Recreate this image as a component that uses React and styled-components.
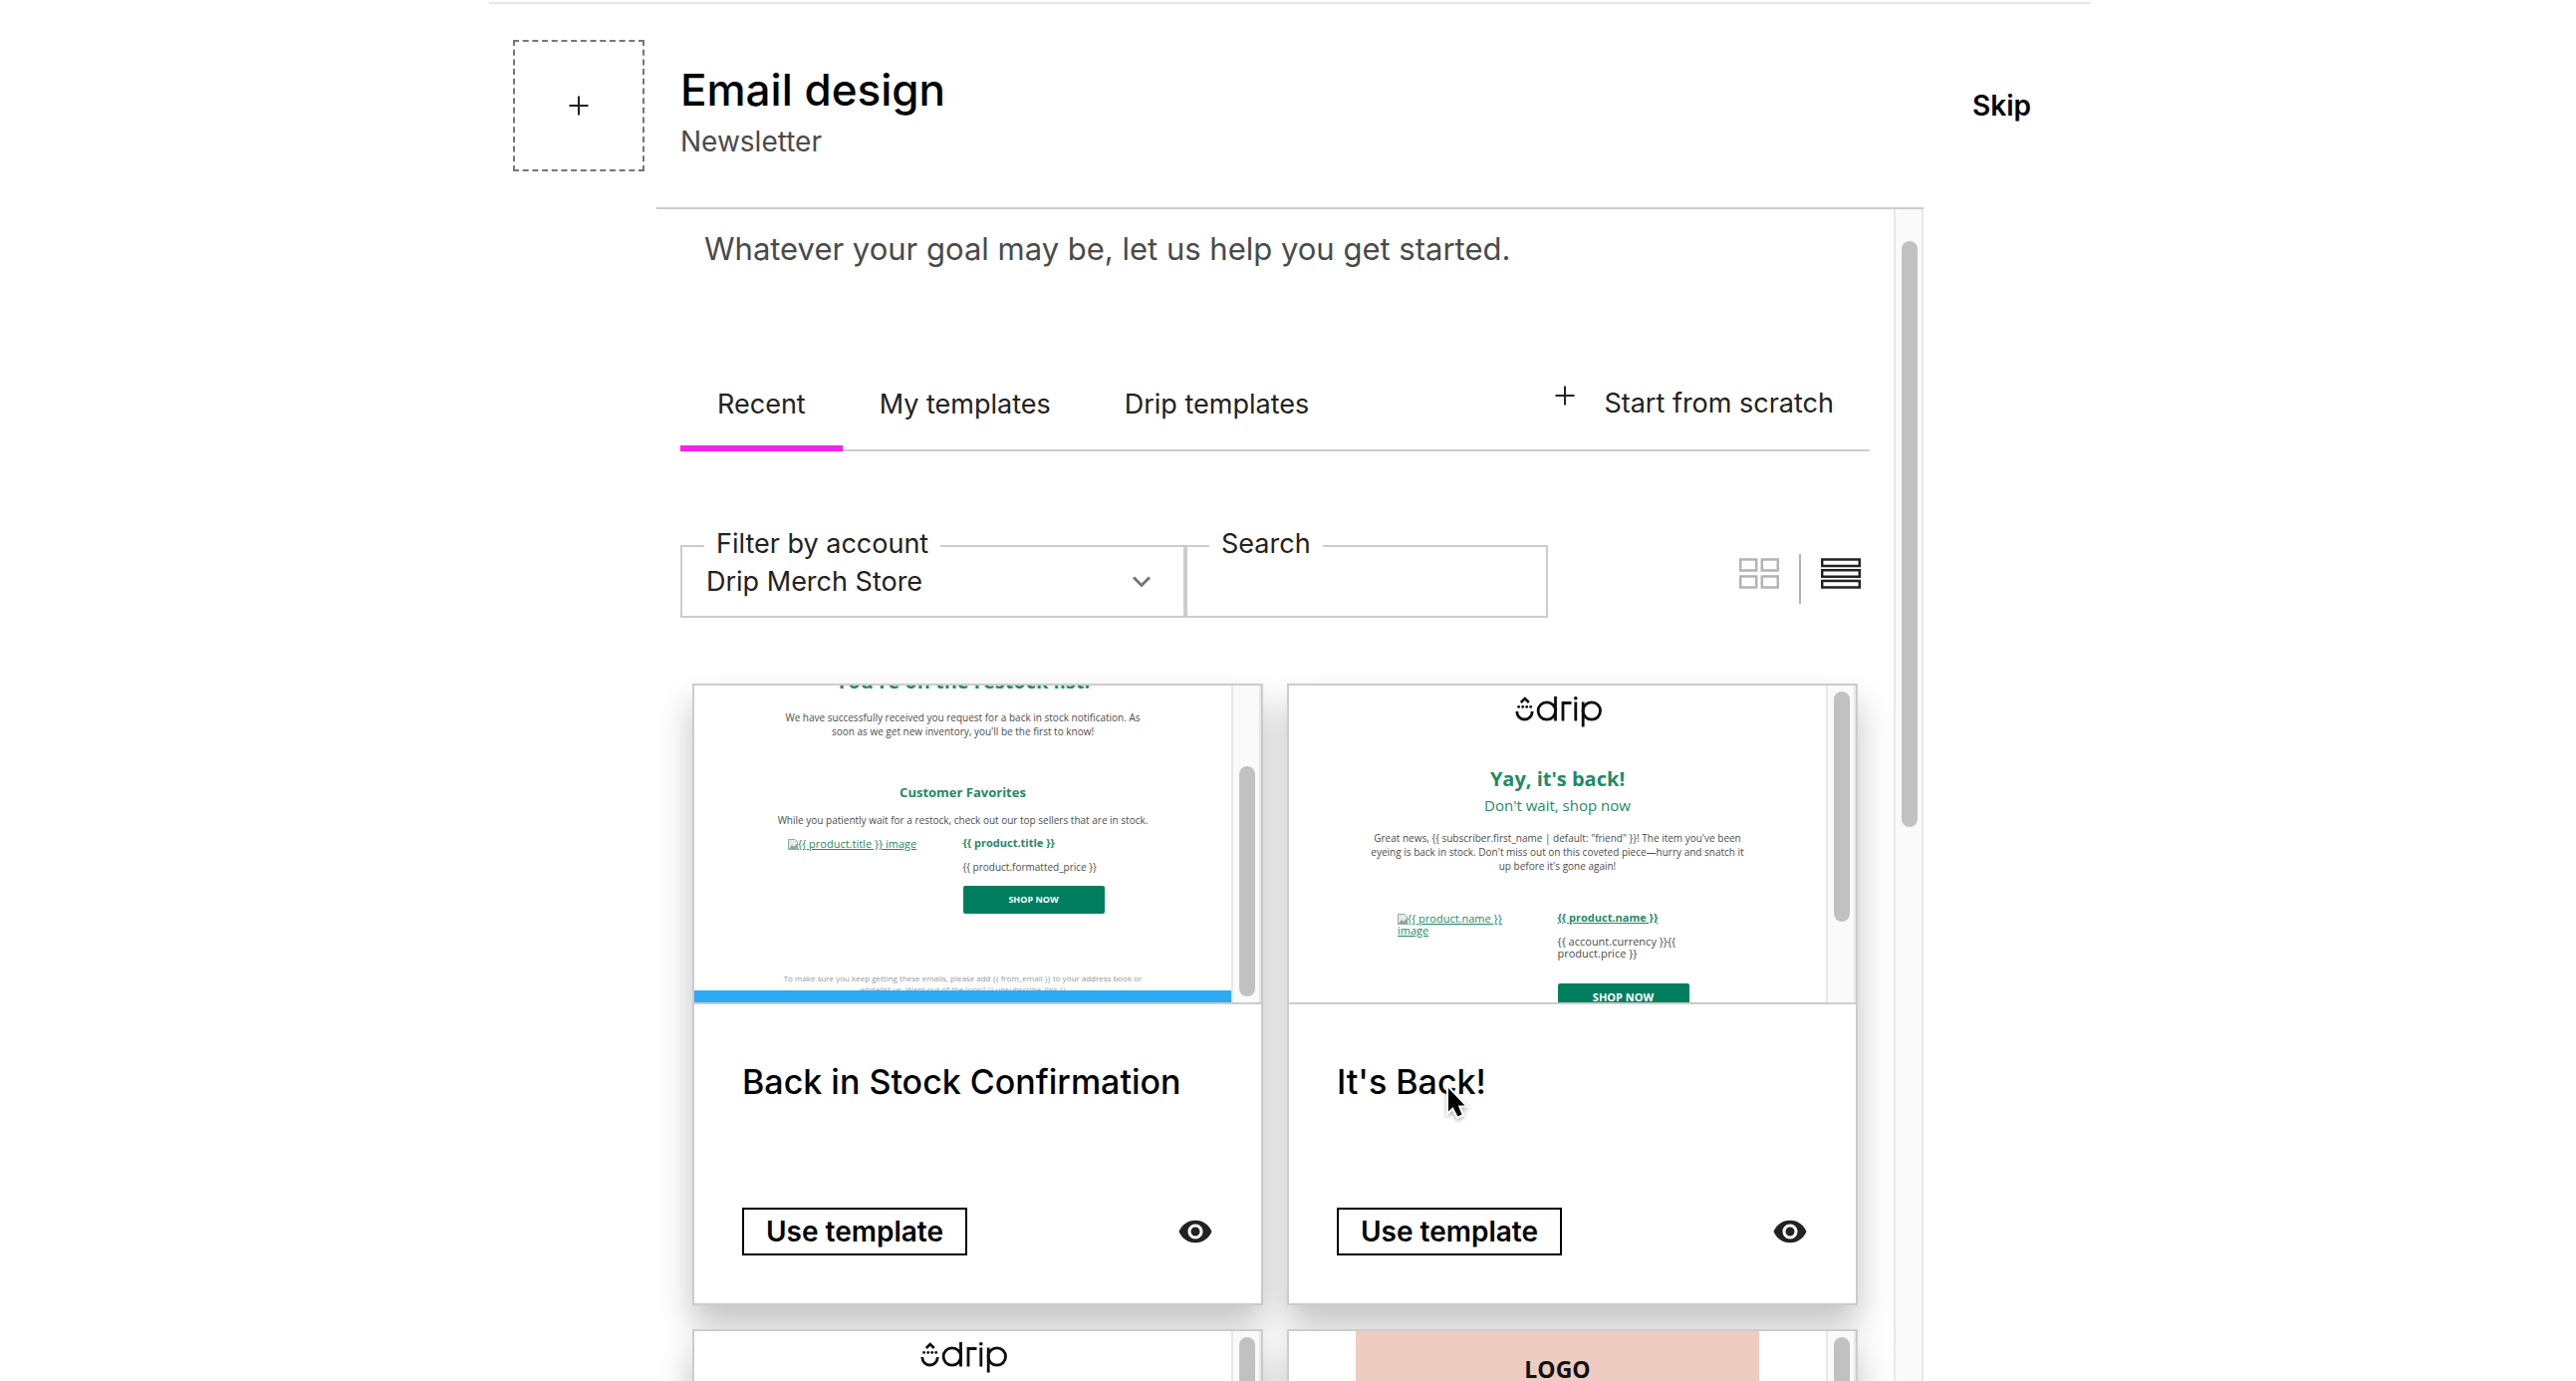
import React from 'react';
import styled, { createGlobalStyle, css } from 'styled-components';
import { MdVisibility } from 'react-icons/md';

const GlobalStyle = createGlobalStyle`
    * {
        box-sizing: border-box;
    }
    body {
        margin: 0;
        background: #fff;
        color: #222;
        font-family: Inter, "Liberation Sans", sans-serif;
        font-size: 28px;
        line-height: 36px;
        overflow: hidden;
    }
    h1, h2, h3, p {
        margin: 0;
    }
    button, input, select {
        font: inherit;
        color: inherit;
        border: 0;
        padding: 0;
        background: none;
        border-radius: 0;
    }
`;

const Page = styled.div`
    display: flex;
    flex-direction: column;
    align-items: center;
    height: 100vh;
    padding: 2px 0 0 4px;
    overflow: hidden;
`;

const Header = styled.header`
    display: flex;
    align-items: center;
    gap: 36px;
    flex: none;
    width: 100%;
    max-width: 1608px;
    height: 206px;
    padding: 0 60px 0 24px;
    border-top: 2px solid #e6e6e6;
`;

const AddButton = styled.button`
    display: flex;
    align-items: center;
    justify-content: center;
    width: 132px;
    height: 132px;
    border: 2px dashed #767676;
`;

const Heading = styled.div`
    flex: 1;
    padding-top: 12px;
`;

const HeaderTitle = styled.h1`
    font-size: 44px;
    font-weight: 500;
    line-height: 60px;
    color: #000;
`;

const HeaderSub = styled.p`
    color: #4a4a4a;
    line-height: 44px;
`;

const SkipButton = styled.button`
    font-weight: 600;
    color: #000;
`;

const Main = styled.main`
    display: flex;
    flex: 1;
    min-height: 0;
    width: 100%;
    max-width: 1272px;
    border-top: 2px solid #ccc;
`;

const Content = styled.div`
    flex: 1;
    min-width: 0;
    padding: 18px 24px 0;
    overflow: hidden;
`;

const Track = styled.div`
    flex: none;
    width: 30px;
    padding: ${props => props.$offset}px 6px 6px;
    background: #fafafa;
    border: solid #e8e8e8;
    border-width: 0 2px;
`;

const Thumb = styled.div`
    width: 16px;
    margin: 0 auto;
    height: ${props => props.$size}px;
    border-radius: 8px;
    background: #c1c1c1;
`;

const Intro = styled.p`
    padding: 0 24px;
    font-size: 31px;
    line-height: 44px;
    color: #4a4a4a;
`;

const Tabs = styled.nav`
    display: flex;
    margin-top: 100px;
    height: 81px;
    border-bottom: 2px solid #ccc;
    font-size: 27px;
`;

const Tab = styled.button`
    height: 81px;
    padding: 0 37px 8px;
    border-bottom: 6px solid transparent;
    ${props => props.$active &&
        css`
            border-bottom-color: #f721f0;
    `}
`;

const ScratchButton = styled.button`
    display: flex;
    align-items: center;
    gap: 29px;
    margin-left: auto;
    padding: 0 36px 13px 0;
    svg {
        margin-bottom: 16px;
    }
`;

const Toolbar = styled.div`
    display: flex;
    align-items: flex-end;
    margin-top: 77px;
    font-size: 27px;
`;

const Field = styled.fieldset`
    position: relative;
    width: ${props => props.$width}px;
    height: 90px;
    margin: 0;
    padding: 0 22px;
    border: 2px solid #ccc;
`;

const Legend = styled.legend`
    padding: 0 12px 4px;
    line-height: 32px;
`;

const Select = styled.select`
    display: block;
    width: 100%;
    height: 36px;
    padding-left: 2px;
    appearance: none;
    outline: none;
`;

const Chevron = styled.svg`
    position: absolute;
    right: 33px;
    top: 12px;
    pointer-events: none;
`;

const SearchInput = styled.input`
    display: block;
    width: 100%;
    height: 36px;
    outline: none;
`;

const ViewSwitch = styled.div`
    display: flex;
    align-items: center;
    gap: 20px;
    height: 50px;
    margin: 0 9px 14px auto;
`;

const IconButton = styled.button`
    display: flex;
    align-items: center;
    color: #222;
`;

const ViewButton = styled(IconButton)`
    height: 31px;
    margin-bottom: 11px;
    color: ${props => (props.$active ? '#222' : '#b3b3b3')};
`;

const Divider = styled.span`
    width: 2px;
    height: 50px;
    background: #b3b3b3;
`;

const CardGrid = styled.div`
    display: grid;
    grid-template-columns: 1fr 1fr;
    gap: 24px;
    padding: 66px 12px 24px;
`;

const Card = styled.article`
    border: 2px solid #ccc;
    background: #fff;
    box-shadow: 0 20px 32px rgba(0, 0, 0, 0.24);
`;

const Preview = styled.div`
    display: flex;
    height: 320px;
    border-bottom: 2px solid #ccc;
`;

const Email = styled.div`
    display: flex;
    flex: 1;
    flex-direction: column;
    align-items: center;
    justify-content: ${props => (props.$scrolled ? 'flex-end' : 'flex-start')};
    overflow: hidden;
    font-family: "Open Sans", "Noto Sans", sans-serif;
    font-size: 10px;
    line-height: 14px;
    text-align: center;
    color: #4d4d4d;
    > * {
        flex: none;
    }
`;

const EmailTitle = styled.h2`
    margin-top: ${props => props.$top || 0}px;
    font-size: 20px;
    line-height: 24px;
    font-weight: 700;
    color: #1f8a68;
`;

const EmailSub = styled.h3`
    font-size: 15px;
    line-height: 28px;
    font-weight: 400;
    color: #1f8a68;
`;

const EmailHeading = styled.h3`
    margin-top: 44px;
    font-size: 13px;
    line-height: 20px;
    font-weight: 700;
    color: #1f8a68;
`;

const EmailText = styled.p`
    width: 380px;
    margin-top: ${props => props.$top}px;
`;

const Product = styled.div`
    display: grid;
    grid-template-columns: 1fr 1fr;
    width: 100%;
    margin-top: ${props => props.$top}px;
    text-align: left;
`;

const MissingImage = styled.a`
    padding: 2px 30px 0 ${props => props.$left}px;
    font-size: 11px;
    line-height: 11px;
    color: #1f8a68;
    svg {
        vertical-align: -2px;
    }
`;

const ProductName = styled.a`
    display: block;
    font-weight: 700;
    font-size: 11px;
    color: #1f8a68;
    text-decoration: ${props => (props.$underline ? 'underline' : 'none')};
`;

const Price = styled.p`
    width: 140px;
    margin-top: 11px;
    font-size: ${props => (props.$large ? 11 : 10)}px;
    line-height: 12px;
`;

const ShopButton = styled.button`
    display: block;
    width: ${props => (props.$large ? 132 : 142)}px;
    height: 28px;
    margin-top: ${props => (props.$large ? 24 : 13)}px;
    border-radius: 2px;
    background: #007e5e;
    color: #fff;
    font-size: ${props => (props.$large ? 11 : 9)}px;
    font-weight: 700;
    line-height: 14px;
`;

const EmailFooter = styled.p`
    width: 380px;
    height: 18px;
    margin-top: 59px;
    overflow: hidden;
    font-size: 8px;
    line-height: 11px;
    color: #999;
`;

const BlueBar = styled.div`
    width: 100%;
    height: 12px;
    background: #2eaaf2;
`;

const Banner = styled.div`
    width: 405px;
    height: 100%;
    padding-top: 20px;
    background: #eeccc2;
    color: #111;
    font-size: 23px;
    font-weight: 700;
    line-height: 36px;
`;

const CardBody = styled.div`
    padding: 56px 48px 48px;
`;

const CardTitle = styled.h2`
    font-size: 34px;
    font-weight: 500;
    line-height: 44px;
    color: #000;
`;

const TitleText = styled.span`
    position: relative;
`;

const Pointer = styled.svg`
    position: absolute;
    left: 109px;
    top: 24px;
    filter: drop-shadow(0 2px 2px rgba(0, 0, 0, 0.3));
`;

const CardActions = styled.div`
    display: flex;
    align-items: center;
    justify-content: space-between;
    margin-top: 104px;
`;

const UseButton = styled.button`
    height: 48px;
    padding: 0 22px;
    border: 2px solid #000;
    font-weight: 600;
    color: #000;
`;

const Plus = () => (
    <svg width="20" height="20" viewBox="0 0 20 20" stroke="#222" strokeWidth="2">
        <path d="M10 0.5V19.5M0.5 10H19.5" />
    </svg>
);

const BrokenImage = () => (
    <svg width="10" height="11" viewBox="0 0 10 11" fill="none">
        <path d="M0.5 0.5H7L9.5 3V10.5H0.5Z" fill="#e4e9ee" stroke="#a3a3a3" />
        <path d="M1 10L4 6L6 8L9 5V10Z" fill="#7fae8c" />
    </svg>
);

const LogoSvg = styled.svg`
    margin-top: 10px;
`;

const DripLogo = () => (
    <LogoSvg width="88" height="32" viewBox="0 0 88 32" fill="none" stroke="#0d0d0d" strokeWidth="2.8">
        <path d="M6.800 7L10.800 3L14.800 7" strokeWidth="2.6" />
        <path d="M2.800 16C2.800 20.600 6.200 24 10.500 24S18.200 20.600 18.200 16" />
        <g fill="#0d0d0d" stroke="none">
            <circle cx="4.600" cy="11.400" r="1.400" />
            <circle cx="8.700" cy="11.400" r="1.400" />
            <circle cx="12.700" cy="11.400" r="1.400" />
            <circle cx="16.700" cy="11.400" r="1.400" />
            <circle cx="61.800" cy="2.800" r="1.800" />
        </g>
        <circle cx="32.800" cy="15.500" r="8.700" />
        <path d="M41.500 1V25.500M49 25.500V7.500H57.500M61.800 6.500V25.500M69.200 6.500V31.500" />
        <circle cx="77.800" cy="15.500" r="8.700" />
    </LogoSvg>
);

const Scrollbar = ({ offset, size }) => (
    <Track $offset={offset}>
        <Thumb $size={size} />
    </Track>
);

const RestockEmail = () => (
    <Email $scrolled>
        <EmailTitle>You're on the restock list!</EmailTitle>
        <EmailText $top={17}>
            We have successfully received you request for a back in stock notification. As soon as we get new inventory, you'll be the first to know!
        </EmailText>
        <EmailHeading>Customer Favorites</EmailHeading>
        <EmailText $top={11}>
            While you patiently wait for a restock, check out our top sellers that are in stock.
        </EmailText>
        <Product $top={9}>
            <MissingImage href="#" $left={94}><BrokenImage />{'{{ product.title }} image'}</MissingImage>
            <div>
                <ProductName href="#">{'{{ product.title }}'}</ProductName>
                <Price>{'{{ product.formatted_price }}'}</Price>
                <ShopButton>SHOP NOW</ShopButton>
            </div>
        </Product>
        <EmailFooter>
            To make sure you keep getting these emails, please add {'{{ from_email }}'} to your address book or whitelist us. Want out of the loop? {'{{ unsubscribe_link }}'}
        </EmailFooter>
        <BlueBar />
    </Email>
);

const BackEmail = () => (
    <Email>
        <DripLogo />
        <EmailTitle $top={40}>Yay, it's back!</EmailTitle>
        <EmailSub>Don't wait, shop now</EmailSub>
        <EmailText $top={12}>
            Great news, {'{{ subscriber.first_name | default: "friend" }}'}! The item you've been eyeing is back in stock. Don't miss out on this coveted piece—hurry and snatch it up before it's gone again!
        </EmailText>
        <Product $top={38}>
            <MissingImage href="#" $left={109}><BrokenImage />{'{{ product.name }} image'}</MissingImage>
            <div>
                <ProductName href="#" $underline>{'{{ product.name }}'}</ProductName>
                <Price $large>{'{{ account.currency }}{{ product.price }}'}</Price>
                <ShopButton $large>SHOP NOW</ShopButton>
            </div>
        </Product>
    </Email>
);

const templates = [
    { name: 'Back in Stock Confirmation', email: <RestockEmail />, offset: 81 },
    { name: "It's Back!", email: <BackEmail />, offset: 6, pointer: true },
    { name: 'Welcome', email: <Email><DripLogo /></Email>, offset: 6 },
    { name: 'Newsletter', email: <Email><Banner>LOGO</Banner></Email>, offset: 6 },
];

const TemplateCard = ({ name, email, offset, pointer }) => (
    <Card>
        <Preview>
            {email}
            <Scrollbar offset={offset} size={231} />
        </Preview>
        <CardBody>
            <CardTitle>
                <TitleText>
                    {name}
                    {pointer && (
                        <Pointer width="28" height="38" viewBox="0 0 28 38">
                            <path
                                d="M3 3V26.500L7.500 22L12.500 31.500L16.500 29.500L12.800 20.500H19.500Z"
                                fill="#000"
                                stroke="#fff"
                                strokeWidth="4"
                                paintOrder="stroke"
                            />
                        </Pointer>
                    )}
                </TitleText>
            </CardTitle>
            <CardActions>
                <UseButton>Use template</UseButton>
                <IconButton aria-label="Preview"><MdVisibility size={36} /></IconButton>
            </CardActions>
        </CardBody>
    </Card>
);

const App = () => (
    <Page>
        <GlobalStyle />
        <Header>
            <AddButton aria-label="Add"><Plus /></AddButton>
            <Heading>
                <HeaderTitle>Email design</HeaderTitle>
                <HeaderSub>Newsletter</HeaderSub>
            </Heading>
            <SkipButton>Skip</SkipButton>
        </Header>
        <Main>
            <Content>
                <Intro>Whatever your goal may be, let us help you get started.</Intro>
                <Tabs>
                    <Tab $active>Recent</Tab>
                    <Tab>My templates</Tab>
                    <Tab>Drip templates</Tab>
                    <ScratchButton><Plus />Start from scratch</ScratchButton>
                </Tabs>
                <Toolbar>
                    <Field $width={507}>
                        <Legend><label htmlFor="account">Filter by account</label></Legend>
                        <Select id="account">
                            <option>Drip Merch Store</option>
                        </Select>
                        <Chevron width="18" height="12" viewBox="0 0 18 12" fill="none" stroke="#767676" strokeWidth="3">
                            <path d="M1 1.500L9 9.500L17 1.500" />
                        </Chevron>
                    </Field>
                    <Field $width={364}>
                        <Legend><label htmlFor="search">Search</label></Legend>
                        <SearchInput id="search" type="text" />
                    </Field>
                    <ViewSwitch>
                        <ViewButton aria-label="Grid view">
                            <svg width="40" height="31" fill="none" stroke="currentColor" strokeWidth="2.5">
                                <path d="M1.200 1.500h16v11h-16zM22.800 1.500h16v11h-16zM1.200 18.500h16v11h-16zM22.800 18.500h16v11h-16z" />
                            </svg>
                        </ViewButton>
                        <Divider />
                        <ViewButton aria-label="List view" $active>
                            <svg width="40" height="31" fill="none" stroke="currentColor" strokeWidth="2.5">
                                <path d="M1.200 1.500h37.600v6.500h-37.600zM1.200 12.200h37.600v6.500h-37.600zM1.200 23h37.600v6.500h-37.600z" />
                            </svg>
                        </ViewButton>
                    </ViewSwitch>
                </Toolbar>
                <CardGrid>
                    {templates.map(template => (
                        <TemplateCard key={template.name} {...template} />
                    ))}
                </CardGrid>
            </Content>
            <Scrollbar offset={32} size={588} />
        </Main>
    </Page>
);

export default App;
